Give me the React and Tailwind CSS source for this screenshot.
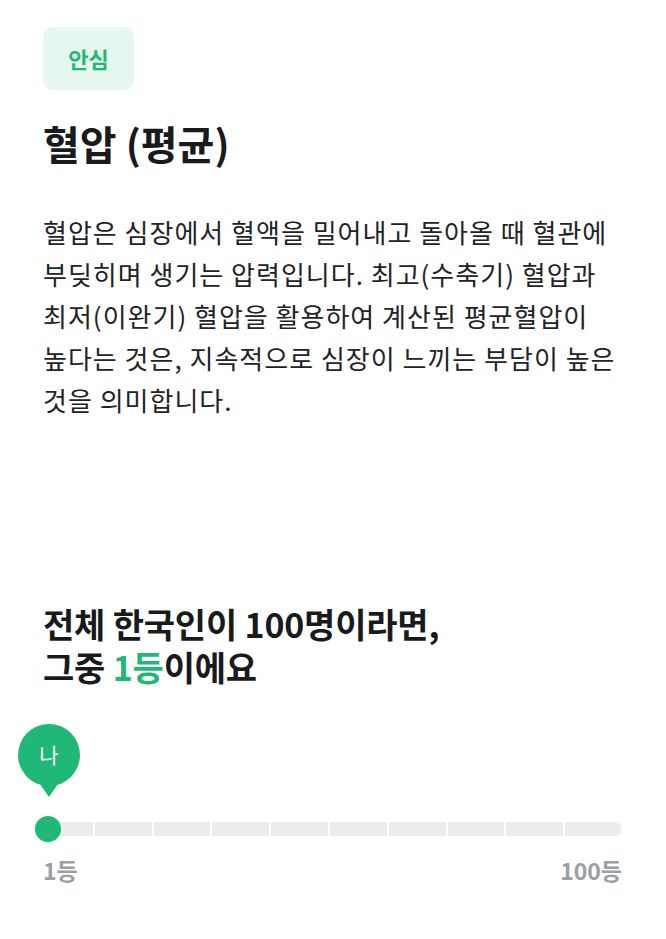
import React from 'react';

const FONT = { fontFamily: '"Noto Sans CJK KR", "Noto Sans", sans-serif' };

const SEGMENTS = Array.from({ length: 10 }, (_, i) => i);

const RankBar = () => (
  <div className="mt-[36px] pl-[36px] pr-[44px]">
    {/* 말풍선 핀 */}
    <div className="relative h-[96px]">
      <div className="absolute left-[-18px] top-0 flex flex-col items-center">
        <div className="w-[62px] h-[62px] rounded-full bg-[#1fb877] flex items-center justify-center text-white text-[21px]">
          나
        </div>
        <div className="w-0 h-0 -mt-[2px] border-l-[9px] border-r-[9px] border-t-[13px] border-l-transparent border-r-transparent border-t-[#1fb877]" />
      </div>
    </div>

    {/* 트랙 */}
    <div className="relative mt-[2px] flex h-[14px] gap-[2px]">
      {SEGMENTS.map((i) => (
        <div
          key={i}
          className={`flex-1 bg-[#ececee] ${i === 9 ? 'rounded-r-full' : ''}`}
        />
      ))}
      <div className="absolute left-[-1px] top-1/2 -translate-y-1/2 w-[26px] h-[26px] rounded-full bg-[#1fb877]" />
    </div>

    <div className="mt-[18px] flex justify-between pl-[7px] text-[23px] leading-[32px] font-semibold text-[#9b9ea6]">
      <span>1등</span>
      <span>100등</span>
    </div>
  </div>
);

export default function App() {
  return (
    <div className="min-h-screen bg-white text-[#191a1c]" style={FONT}>
      <div className="pt-[27px] px-[43px]">
        <div className="inline-flex items-center justify-center w-[91px] h-[63px] rounded-[10px] bg-[#e5f7ef] text-[#1fb877] text-[22px] font-semibold">
          안심
        </div>

        <h1 className="mt-[27px] text-[40px] leading-[52px] font-bold">
          혈압 (평균)
        </h1>

        <p className="mt-[42px] text-[26px] leading-[42px] text-[#222325] tracking-[1px]">
          혈압은 심장에서 혈액을 밀어내고 돌아올 때 혈관에<br />
          부딪히며 생기는 압력입니다. 최고(수축기) 혈압과<br />
          최저(이완기) 혈압을 활용하여 계산된 평균혈압이<br />
          높다는 것은, 지속적으로 심장이 느끼는 부담이 높은<br />
          것을 의미합니다.
        </p>

        <h2 className="mt-[181px] flex flex-col text-[34px] leading-[43px] font-bold tracking-[-0.2px]">
          <span>전체 한국인이 100명이라면,</span>
          <span>
            그중 <span className="text-[#1fb877]">1등</span>이에요
          </span>
        </h2>
      </div>

      <RankBar />
    </div>
  );
}
